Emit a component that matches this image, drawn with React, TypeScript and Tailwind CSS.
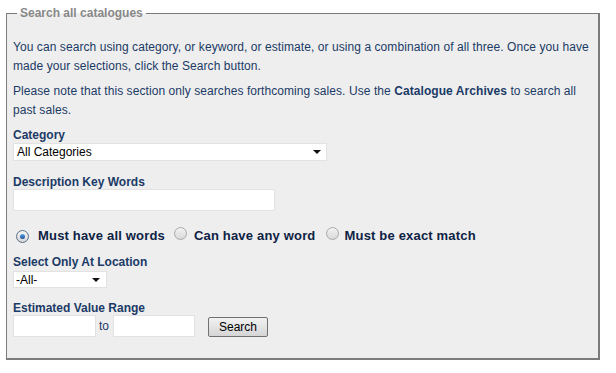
import React from "react";

function Radio({ checked }: { checked?: boolean }) {
  return (
    <span
      className={
        "inline-flex h-[13px] w-[13px] shrink-0 items-center justify-center rounded-full border " +
        (checked
          ? "border-[#5a6f86] bg-gradient-to-b from-[#f4f4f4] to-[#d6d6d6]"
          : "border-[#a8a8a8] bg-gradient-to-b from-[#f2f2f2] to-[#d9d9d9]")
      }
    >
      {checked && (
        <span className="h-[5px] w-[5px] rounded-full bg-gradient-to-b from-[#5fa4e6] to-[#1a4f9a]" />
      )}
    </span>
  );
}

function Arrow() {
  return (
    <svg width="8" height="4" viewBox="0 0 8 4" className="shrink-0">
      <polygon points="0,0 8,0 4,4" fill="#111" />
    </svg>
  );
}

export default function App() {
  return (
    <div
      className="min-h-[373px] w-[616px] bg-white pt-[6px] text-[12px] leading-[14px] text-[#1b3a66]"
      style={{ fontFamily: '"Liberation Sans", Arial, sans-serif' }}
    >
      <fieldset className="ml-[6px] h-[354px] w-[594px] border border-r-2 border-b-2 border-[#7b7b7b] bg-[#eeeeee] pl-[6px]">
        <legend className="ml-[4px] px-[3px] text-[12px] font-bold leading-[14px] text-[#888888]">
          Search all catalogues
        </legend>
        <p className="mt-[18px] leading-[19px] tracking-[0.07px]">
          You can search using category, or keyword, or estimate, or using a combination of all three. Once you have
          <br />
          made your selections, click the Search button.
        </p>
        <p className="mt-[6px] leading-[19px] tracking-[0.07px]">
          Please note that this section only searches forthcoming sales. Use the{" "}
          <span className="font-bold">Catalogue Archives</span> to search all
          <br />
          past sales.
        </p>

        <div className="mt-[8px] font-bold">Category</div>
        <div className="mt-[1px] flex h-[18px] w-[314px] items-center justify-between border border-[#e2e2e2] bg-white pl-[3px] pr-[5px] text-[#000]">
          <span>All Categories</span>
          <Arrow />
        </div>

        <div className="mt-[14px] font-bold">Description Key Words</div>
        <div className="h-[22px] w-[262px] border border-[#e2e2e2] bg-white" />

        <div className="mt-[16px] flex items-center text-[13px] font-bold leading-[15px] tracking-[0.18px] text-[#0d2244]">
          <span className="ml-[3px] mr-[9px]"><Radio checked /></span>
          <span>Must have all words</span>
          <span className="ml-[9px] mr-[7px]"><Radio /></span>
          <span>Can have any word</span>
          <span className="ml-[10px] mr-[6px]"><Radio /></span>
          <span>Must be exact match</span>
        </div>

        <div className="mt-[12px] font-bold">Select Only At Location</div>
        <div className="mt-[2px] flex h-[17px] w-[94px] items-center justify-between border border-[#e2e2e2] bg-white pl-[2px] pr-[6px] text-[#000]">
          <span>-All-</span>
          <Arrow />
        </div>

        <div className="mt-[13px] font-bold">Estimated Value Range</div>
        <div className="flex items-center">
          <div className="h-[22px] w-[83px] border border-[#e2e2e2] bg-white" />
          <span className="ml-[3px] mr-[4px]">to</span>
          <div className="h-[22px] w-[82px] border border-[#e2e2e2] bg-white" />
          <button className="ml-[13px] mt-[1px] h-[20px] w-[60px] rounded-[2px] border border-[#707070] bg-gradient-to-b from-[#f2f2f2] to-[#d5d5d5] text-[12px] leading-[14px] text-[#000]">
            Search
          </button>
        </div>
      </fieldset>
    </div>
  );
}
